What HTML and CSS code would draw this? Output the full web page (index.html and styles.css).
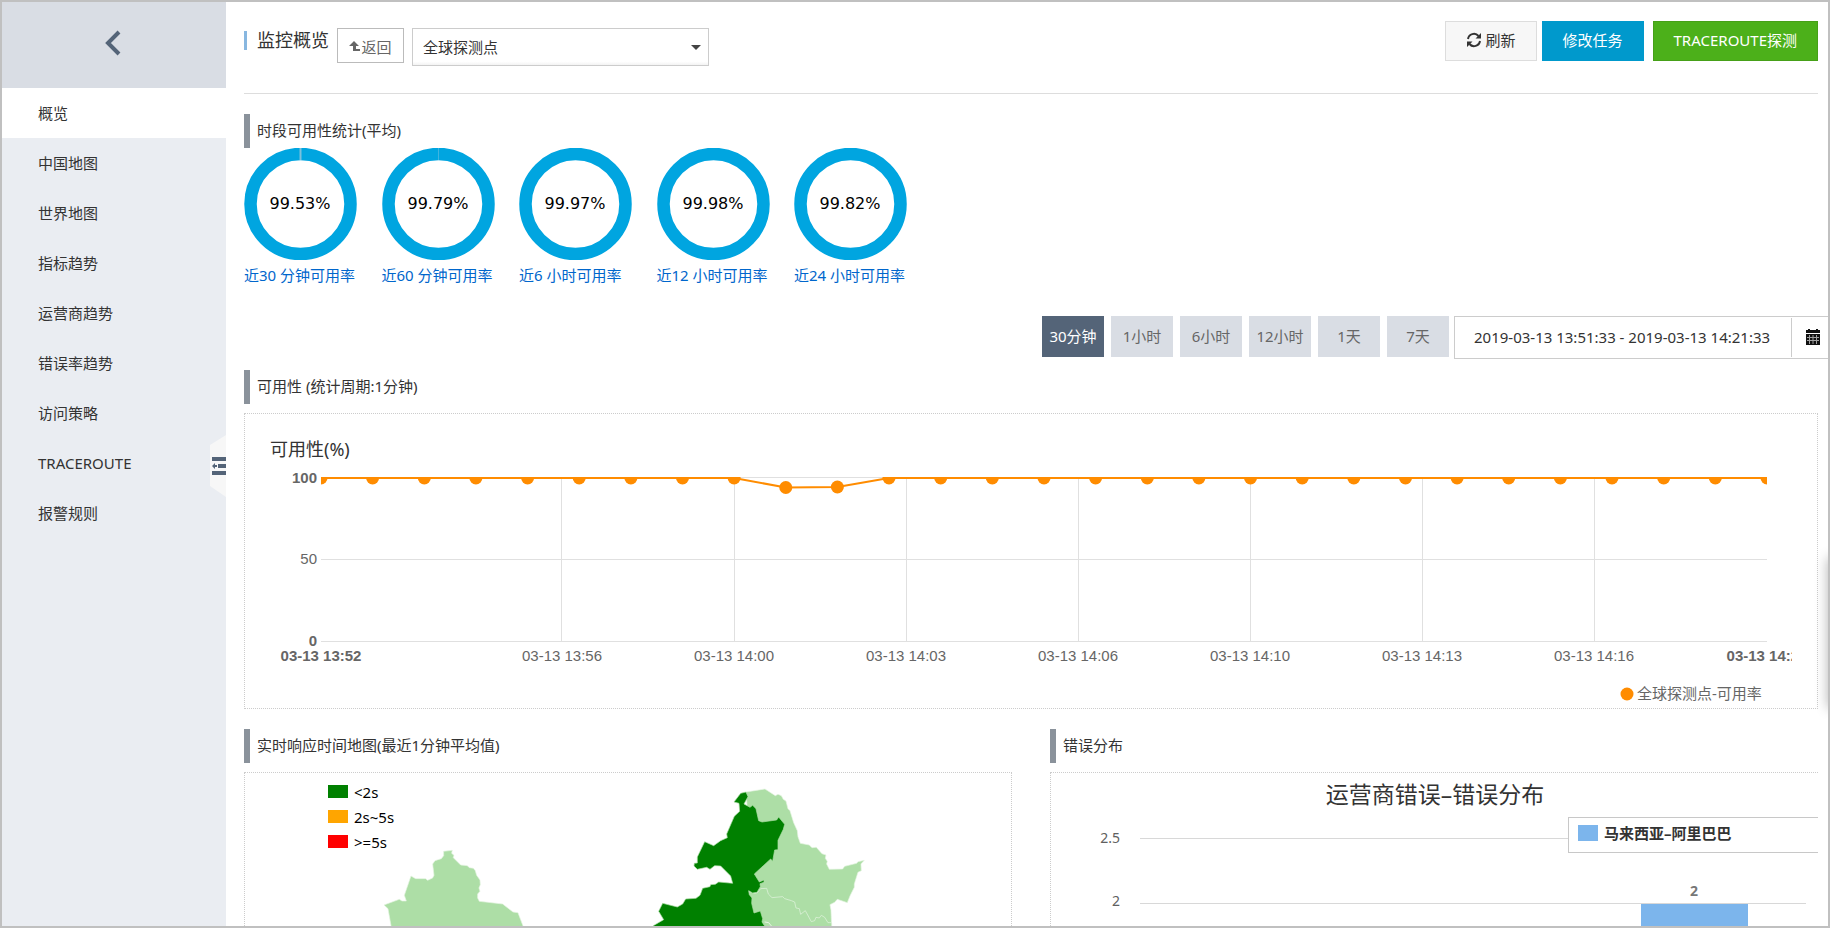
FILE: index.html
```html
<!DOCTYPE html>
<html lang="zh-CN">
<head>
  <meta charset="UTF-8">
  <title>监控概览</title>
  <link rel="stylesheet" href="styles.css">
</head>
<body>
  <aside class="sidebar">
    <button class="sidebar-back" aria-label="后退">
      <svg width="18" height="26" viewBox="0 0 18 26"><path d="M15 2L4 13l11 11" fill="none" stroke="#546478" stroke-width="4"/></svg>
    </button>
    <nav class="menu">
      <a href="#" class="active">概览</a>
      <a href="#">中国地图</a>
      <a href="#">世界地图</a>
      <a href="#">指标趋势</a>
      <a href="#">运营商趋势</a>
      <a href="#">错误率趋势</a>
      <a href="#">访问策略</a>
      <a href="#">TRACEROUTE</a>
      <a href="#">报警规则</a>
    </nav>
    <button class="collapse" aria-label="收起菜单">
      <svg width="16" height="62" viewBox="0 0 16 62">
        <path d="M16 0L0 10v41l16 11z" fill="#f7f7f7"/>
        <path d="M2 22h14v4H2zM8 29h8v4H8zM2 36h14v4H2zM2 31l3-3v2h2v2H5v2z" fill="#546478"/>
      </svg>
    </button>
  </aside>

  <main class="main">
    <header class="page-header">
      <div class="header-left">
        <h1>监控概览</h1>
        <button class="btn-return">
          <svg width="11" height="11" viewBox="0 0 11 11"><path d="M5 0l5 5H7v3h4v2H4V5H0z" fill="#666"/></svg>返回
        </button>
        <div class="select-wrap">
          <select aria-label="探测点">
            <option>全球探测点</option>
          </select>
        </div>
      </div>
      <div class="header-right">
        <button class="btn btn-default">
          <svg width="16" height="16" viewBox="0 0 16 16">
            <path d="M2 7a6 6 0 0 1 10.500-3M14 9a6 6 0 0 1-10.500 3" fill="none" stroke="#333" stroke-width="2"/>
            <path d="M15 1v5.500h-5.500zM1 15V9.500h5.500z" fill="#333"/>
          </svg>
          刷新
        </button>
        <button class="btn btn-primary">修改任务</button>
        <button class="btn btn-success">TRACEROUTE探测</button>
      </div>
    </header>

    <h2 class="section-title">时段可用性统计(平均)</h2>
    <div class="rings">
      <a href="#" class="ring">
        <svg width="113" height="112" viewBox="0 0 113 112">
          <circle cx="56.500" cy="56" r="50" fill="none" stroke="#00a5e0" stroke-width="12.500"/>
          <path d="M56.500 0v12" stroke="#7cc0dc" stroke-width="2"/>
          <text x="56" y="61">99.53%</text>
        </svg>
        <span>近30 分钟可用率</span>
      </a>
      <a href="#" class="ring">
        <svg width="113" height="112" viewBox="0 0 113 112">
          <circle cx="56.500" cy="56" r="50" fill="none" stroke="#00a5e0" stroke-width="12.500"/>
          <path d="M56.500 0v12" stroke="#3fb4e0"/>
          <text x="56" y="61">99.79%</text>
        </svg>
        <span>近60 分钟可用率</span>
      </a>
      <a href="#" class="ring">
        <svg width="113" height="112" viewBox="0 0 113 112">
          <circle cx="56.500" cy="56" r="50" fill="none" stroke="#00a5e0" stroke-width="12.500"/>
          <text x="56" y="61">99.97%</text>
        </svg>
        <span>近6 小时可用率</span>
      </a>
      <a href="#" class="ring">
        <svg width="113" height="112" viewBox="0 0 113 112">
          <circle cx="56.500" cy="56" r="50" fill="none" stroke="#00a5e0" stroke-width="12.500"/>
          <text x="56" y="61">99.98%</text>
        </svg>
        <span>近12 小时可用率</span>
      </a>
      <a href="#" class="ring">
        <svg width="113" height="112" viewBox="0 0 113 112">
          <circle cx="56.500" cy="56" r="50" fill="none" stroke="#00a5e0" stroke-width="12.500"/>
          <text x="56" y="61">99.82%</text>
        </svg>
        <span>近24 小时可用率</span>
      </a>
    </div>

    <div class="range-bar">
      <button class="active">30分钟</button>
      <button>1小时</button>
      <button>6小时</button>
      <button>12小时</button>
      <button>1天</button>
      <button>7天</button>
      <div class="date-range">
        <input type="text" aria-label="时间范围" value="2019-03-13 13:51:33 - 2019-03-13 14:21:33">
        <button class="date-btn" aria-label="选择日期">
          <svg width="14" height="16" viewBox="0 0 14 16">
            <path d="M0 1h2V0h2v1h6V0h2v1h2v3H0zM0 5h14v11H0z" fill="#111"/>
            <path d="M1 8.500h12M1 11.500h12M3.500 6v9M7 6v9M10.500 6v9" stroke="#fff" stroke-width="1" opacity=".6"/>
          </svg>
        </button>
      </div>
    </div>

    <h2 class="section-title">可用性 (统计周期:1分钟)</h2>
    <div class="panel">
      <svg class="line-chart" viewBox="0 0 1572 294">
        <defs>
          <clipPath id="plot"><rect x="76" y="63" width="1446" height="165"/></clipPath>
          <clipPath id="labels"><rect x="0" y="0" width="1547" height="294"/></clipPath>
          <marker id="dot" markerUnits="userSpaceOnUse" markerWidth="14" markerHeight="14" refX="7" refY="7">
            <circle cx="7" cy="7" r="6.500" fill="#ff8c00"/>
          </marker>
        </defs>
        <text class="chart-title" x="25" y="42">可用性(%)</text>
        <path class="grid" d="M76 63.500H1522M76 145.500H1522M76 227.500H1522M316.500 64V227M489.500 64V227M661.500 64V227M833.500 64V227M1005.500 64V227M1177.500 64V227M1349.500 64V227"/>
        <polyline class="series" clip-path="url(#plot)" points="76,64 127.600,64 179.300,64 230.900,64 282.600,64 334.200,64 385.900,64 437.500,64 489.100,64 540.800,73.500 592.400,73 644,64 695.700,64 747.300,64 799,64 850.600,64 902.300,64 953.900,64 1005.500,64 1057.200,64 1108.800,64 1160.500,64 1212.100,64 1263.700,64 1315.400,64 1367,64 1418.700,64 1470.300,64 1522,64"/>
        <g class="y-axis">
          <text class="bold" x="72" y="69">100</text>
          <text x="72" y="150">50</text>
          <text class="bold" x="72" y="232">0</text>
        </g>
        <g class="x-axis" clip-path="url(#labels)">
          <text class="bold" x="76" y="247">03-13 13:52</text>
          <text x="317" y="247">03-13 13:56</text>
          <text x="489" y="247">03-13 14:00</text>
          <text x="661" y="247">03-13 14:03</text>
          <text x="833" y="247">03-13 14:06</text>
          <text x="1005" y="247">03-13 14:10</text>
          <text x="1177" y="247">03-13 14:13</text>
          <text x="1349" y="247">03-13 14:16</text>
          <text class="bold" x="1522" y="247">03-13 14:20</text>
        </g>
        <circle cx="1382" cy="280" r="6.500" fill="#ff8c00"/>
        <text class="legend-text" x="1392" y="285">全球探测点-可用率</text>
      </svg>
    </div>

    <div class="columns">
      <section>
        <h2 class="section-title">实时响应时间地图(最近1分钟平均值)</h2>
        <div class="panel">
          <svg class="map" viewBox="0 0 766 400">
            <g class="map-legend">
              <rect x="83" y="12" width="20" height="13" fill="green"/>
              <text x="109" y="25">&lt;2s</text>
              <rect x="83" y="37" width="20" height="13" fill="orange"/>
              <text x="109" y="50">2s~5s</text>
              <rect x="83" y="62" width="20" height="13" fill="red"/>
              <text x="109" y="75">&gt;=5s</text>
            </g>
            <!-- 新疆 -->
            <g transform="translate(-15 -63) scale(.3333)">
              <path class="area" d="M484 652L474 596 462 585 508 568 516 573 529 573 523 556 543 498 557 506 587 506 593 511 608 504 612 496 608 462 615 452 634 446 641 437 641 424 667 421 665 430 672 436 670 443 692 465 712 467 718 473 730 475 736 482 740 496 750 510 751 524 747 534 750 544 743 552 743 564 748 574 818 582 849 606 864 608 880 650 920 800H500z"/>
            </g>
            <!-- 黑龙江、吉林、内蒙古 -->
            <g transform="translate(375 -13) scale(.3333)">
              <path class="area" d="M378 96L435 87 466 107 474 103 484 107 490 118 498 123 504 146 510 152 521 188 532 212 534 230 541 250 568 255 576 263 589 262 606 281 618 285 616 295 622 304 620 312 628 328 668 327 674 319 710 310 714 305 733 301 723 312 724 332 714 337 703 372 703 382 690 408 682 428 652 418 644 427 630 434 633 450 635 500 600 620H420z"/>
              <path class="area" d="M386 394L405 400 412 398 422 386 440 385 445 402 456 413 488 410 494 416 514 422 524 426 528 444 538 446 542 463 556 452 574 485 584 482 588 472 598 474 604 466 614 472 624 488 635 488V620H420z"/>
              <path class="area hot" d="M378 96L384 110 372 132 390 142 398 136 408 146 416 182 426 186 470 180 476 171 494 193 490 208 474 241 474 269 464 270 458 304 452 297 403 342 418 366 432 360 432 367 420 371 421 380 411 397 398 399 386 392 388 404 396 414 395 430 402 459 421 453 428 476 426 486 434 498 450 620H60L100 497 131 479 116 454 128 430 172 441 188 432 197 417 228 415 240 406 248 385 270 380 272 374 286 373 296 366 338 370 332 348 302 318 284 317 270 328 260 322 232 328 222 318 223 310 232 309 232 291 254 245 281 257 302 242 322 233 320 222 343 169 359 154 357 130 342 126 362 100z"/>
              <path class="border-line" d="M434 486L446 488 456 500"/>
            </g>
          </svg>
        </div>
      </section>
      <section>
        <h2 class="section-title">错误分布</h2>
        <div class="panel panel-open">
          <svg class="bar-chart" viewBox="0 0 767 400">
            <text class="bar-title" x="384" y="30">运营商错误–错误分布</text>
            <path class="bar-grid" d="M89 65.500H755M89 130.500H755"/>
            <g class="bar-axis">
              <text x="69" y="70">2.5</text>
              <text x="69" y="133">2</text>
            </g>
            <text class="bar-value" x="643" y="123">2</text>
            <rect x="590" y="131" width="107" height="269" fill="#7cb5ec"/>
            <rect class="legend-box" x="517.500" y="44.500" width="300" height="35"/>
            <rect x="527" y="52" width="20" height="16" fill="#7cb5ec"/>
            <text class="bar-legend" x="553" y="66">马来西亚–阿里巴巴</text>
          </svg>
        </div>
      </section>
    </div>
  </main>
  <div class="side-float"></div>
</body>
</html>
```
FILE: styles.css
```css
* {
  box-sizing: border-box;
}

body {
  margin: 0;
  height: 100vh;
  border: 2px solid #c0c0c0;
  display: flex;
  overflow: hidden;
  position: relative;
  background: #fff;
  color: #333;
  font-family: "Noto Sans", "Noto Sans CJK SC", sans-serif;
  font-size: 15px;
}

button, input, select {
  font: inherit;
  color: inherit;
}

button {
  cursor: pointer;
}

a {
  text-decoration: none;
}

/* sidebar */
.sidebar {
  flex: 0 0 224px;
  position: relative;
  background: #eaedf2;
}

.sidebar-back {
  display: flex;
  align-items: center;
  justify-content: center;
  width: 100%;
  height: 86px;
  padding: 0 2px 4px 0;
  border: none;
  background: #d9dde4;
}

.menu a {
  display: block;
  height: 50px;
  line-height: 50px;
  padding-left: 36px;
  color: #333;
}

.menu a.active {
  background: #fff;
}

.collapse {
  position: absolute;
  right: 0;
  top: 433px;
  padding: 0;
  border: none;
  background: none;
}

.collapse svg {
  display: block;
}

/* main */
.main {
  flex: 1;
  min-width: 0;
  padding: 0 10px 0 18px;
  overflow: hidden;
}

.page-header {
  display: flex;
  justify-content: space-between;
  align-items: flex-start;
  height: 92px;
  padding-top: 19px;
  margin-bottom: 20px;
  border-bottom: 1px solid #ddd;
}

.header-left {
  display: flex;
  align-items: flex-start;
  gap: 8px;
  padding-top: 7px;
}

h1 {
  display: flex;
  align-items: center;
  gap: 10px;
  margin: 0;
  font-size: 18px;
  font-weight: normal;
  line-height: 24px;
}

h1::before {
  content: "";
  width: 3px;
  height: 19px;
  background: #88b7e0;
}

.btn-return {
  display: flex;
  align-items: center;
  justify-content: center;
  gap: 1px;
  width: 67px;
  height: 35px;
  padding: 2px 0 0;
  border: 1px solid #bbb;
  background: #fff;
  color: #666;
}

.select-wrap {
  position: relative;
}

.select-wrap select {
  appearance: none;
  width: 297px;
  height: 38px;
  padding: 0 10px;
  border: 1px solid #ccc;
  border-radius: 0;
  background: linear-gradient(#fff 90%, #f3f3f3);
}

.select-wrap::after {
  content: "";
  position: absolute;
  right: 8px;
  top: 17px;
  border: 5px solid transparent;
  border-top-color: #444;
  border-bottom: none;
  pointer-events: none;
}

.header-right {
  display: flex;
  gap: 5px;
}

.btn {
  display: flex;
  align-items: center;
  gap: 4px;
  height: 40px;
  padding: 0 20px 3px;
  border: 1px solid transparent;
}

.btn-default {
  background: #f7f7f7;
  border-color: #ddd;
}

.btn-primary {
  background: #0099cc;
  color: #fff;
}

.btn-success {
  margin-left: 4px;
  background: #4cb01a;
  border-color: #46a018;
  color: #fff;
}

.section-title {
  margin: 0;
  padding: 0 0 2px 7px;
  border-left: 6px solid #8a929b;
  font-size: 15px;
  font-weight: normal;
  line-height: 32px;
}

.rings {
  display: flex;
  justify-content: space-between;
  width: 663px;
}

.ring {
  width: 113px;
  color: #0066cc;
  white-space: nowrap;
}

.ring svg {
  display: block;
}

.ring span {
  display: block;
  padding-bottom: 2px;
  line-height: 30px;
}

.ring text {
  font-family: "DejaVu Sans", sans-serif;
  font-size: 16px;
  text-anchor: middle;
  fill: #000;
}

.range-bar {
  display: flex;
  justify-content: flex-end;
  align-items: flex-start;
  gap: 7px;
  margin: 24px -10px 11px 0;
}

.range-bar > button {
  width: 62px;
  height: 41px;
  padding: 0 0 2px;
  border: none;
  background: #d9dde4;
  color: #666;
}

.range-bar > button.active {
  background: #546478;
  color: #fff;
}

.date-range {
  display: flex;
  height: 43px;
  margin-left: -2px;
  border: 1px solid #ccc;
  border-right: none;
}

.date-range input {
  width: 336px;
  padding: 0 0 2px 19px;
  border: none;
  background: none;
}

.date-btn {
  display: flex;
  align-items: center;
  justify-content: center;
  width: 37px;
  margin: 1px 0;
  padding: 0 0 2px 6px;
  border: none;
  border-left: 1px solid #ccc;
  background: none;
}

.panel {
  margin-top: 9px;
  border: 1px dotted #ccc;
}

.panel svg {
  display: block;
  width: 100%;
}

.panel-open {
  border-right: none;
}

/* availability chart */
.chart-title {
  font-size: 18px;
  fill: #333;
}

.grid {
  fill: none;
  stroke: #e0e0e0;
}

.series {
  fill: none;
  stroke: #ff8c00;
  stroke-width: 2;
  marker-start: url(#dot);
  marker-mid: url(#dot);
  marker-end: url(#dot);
}

.y-axis, .x-axis {
  font-family: "Liberation Sans", sans-serif;
  font-size: 15px;
  fill: #666;
}

.y-axis {
  text-anchor: end;
}

.x-axis {
  text-anchor: middle;
}

.bold {
  font-weight: bold;
}

.legend-text {
  font-size: 15px;
  fill: #666;
}

/* bottom row */
.columns {
  display: grid;
  grid-template-columns: 1fr 1fr;
  gap: 38px;
  margin-top: 20px;
}

.map-legend {
  font-size: 15px;
}

.area {
  fill: #addea6;
  stroke: #e6f5e3;
  stroke-width: 2;
}

.hot {
  fill: #008000;
  stroke: #addea6;
}

.border-line {
  fill: none;
  stroke: #e6f5e3;
  stroke-width: 3;
}

.bar-title {
  font-size: 23px;
  text-anchor: middle;
  fill: #333;
}

.bar-grid {
  stroke: #d8d8d8;
}

.bar-axis {
  font-size: 14px;
  text-anchor: end;
  fill: #606060;
}

.bar-value {
  font-size: 14px;
  font-weight: bold;
  text-anchor: middle;
  fill: #777;
}

.legend-box {
  fill: #fff;
  stroke: #c8c8c8;
}

.bar-legend {
  font-size: 15px;
  font-weight: bold;
  fill: #333;
}

/* floating toolbar parked past the right edge, only its shadow shows */
.side-float {
  position: absolute;
  left: 100%;
  top: 556px;
  width: 40px;
  height: 150px;
  box-shadow: 0 0 12px rgba(0, 0, 0, 0.3);
}
```
